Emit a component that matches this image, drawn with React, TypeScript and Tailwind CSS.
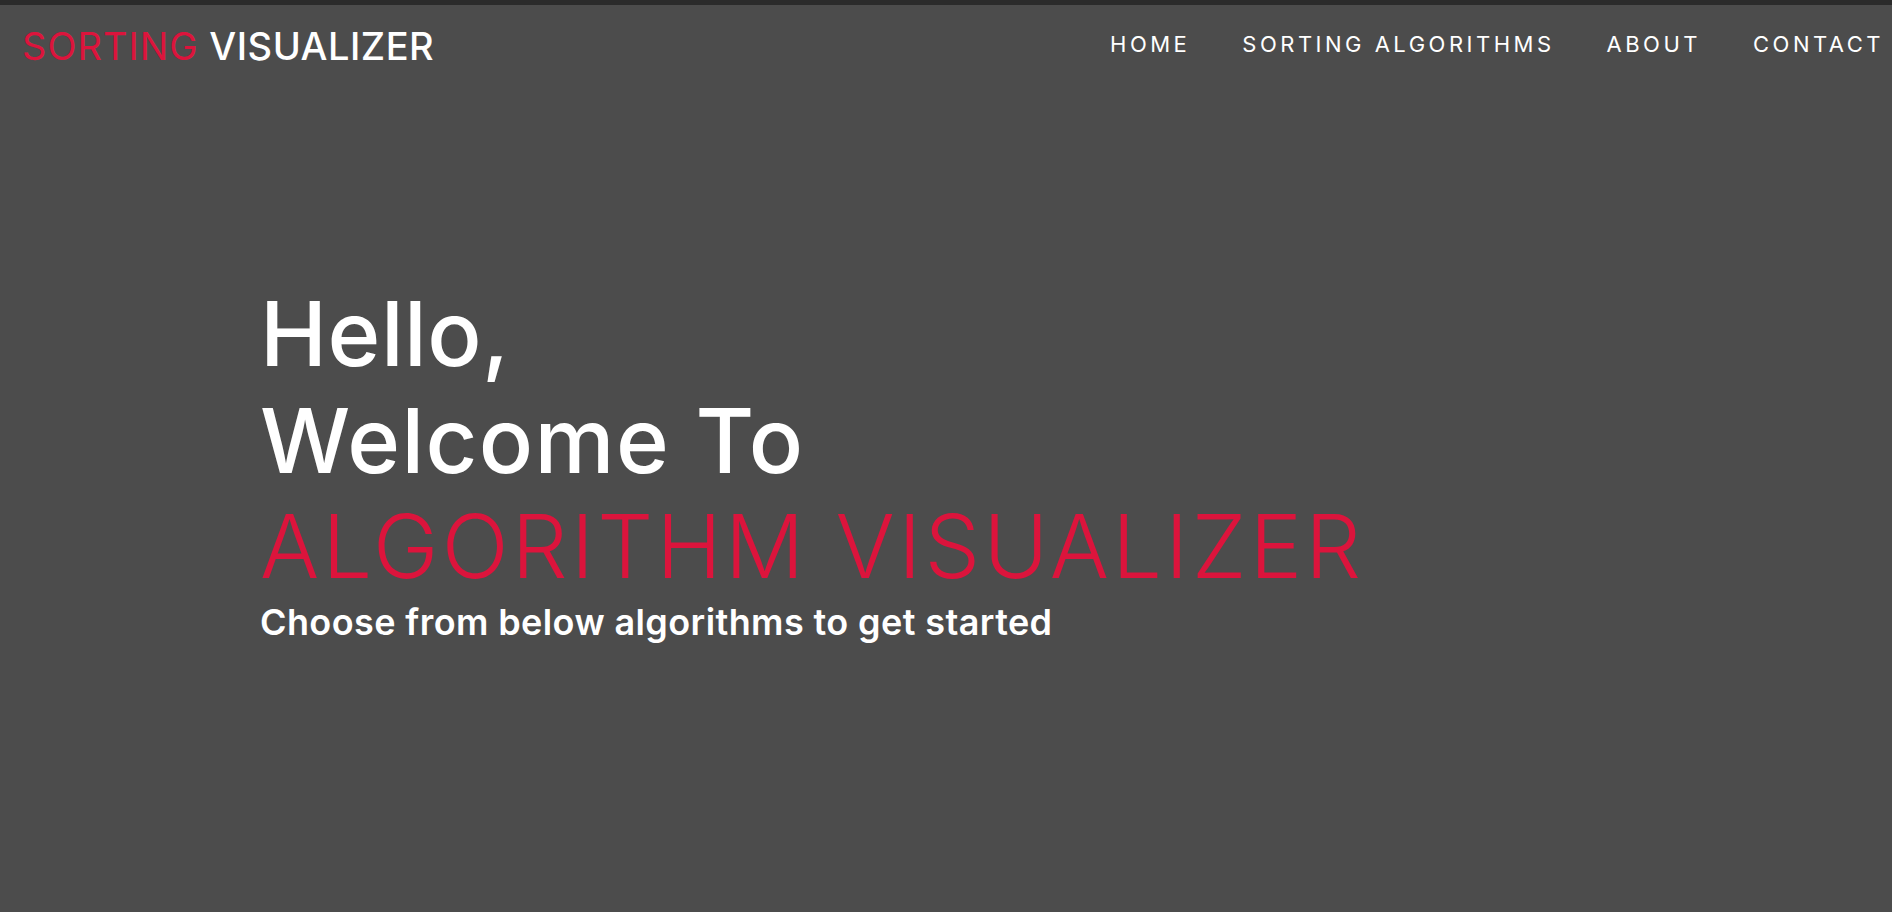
import React from 'react';

const navLinks = ['Home', 'Sorting Algorithms', 'About', 'Contact'];

const App: React.FC = () => {
  return (
    <div className="min-h-screen w-full bg-[#4c4c4c] font-['Inter','Noto_Sans',sans-serif] text-white">
      <div className="h-[5px] bg-[#2b2b2b]"></div>

      <header className="flex h-[81px] items-center justify-between pl-[22px] pr-[8px]">
        <a href="#" className="text-[38px] leading-[44px] whitespace-nowrap">
          <span className="font-normal text-[#dc143c] tracking-[1px]">SORTING</span>{' '}
          <span className="font-medium text-white tracking-[0.5px]">VISUALIZER</span>
        </a>
        <nav className="flex items-center gap-[52px] mb-[3px]">
          {navLinks.map((link) => (
            <a
              key={link}
              href="#"
              className="text-[22px] leading-[28px] font-normal uppercase tracking-[3.5px] text-white"
            >
              {link}
            </a>
          ))}
        </nav>
      </header>

      <main className="pl-[260px] pt-[194px]">
        <h1 className="font-medium text-white">
          <span className="block text-[90px] leading-[107px] tracking-[0.5px]">Hello,</span>
          <span className="block text-[90px] leading-[107px] tracking-[1.4px]">Welcome To</span>
          <span className="block text-[88px] leading-[105px] font-light text-[#dc143c] tracking-[3.3px]">
            ALGORITHM VISUALIZER
          </span>
        </h1>
        <p className="mt-[1px] text-[36px] leading-[44px] font-semibold tracking-[0.4px] text-white">
          Choose from below algorithms to get started
        </p>
      </main>
    </div>
  );
};

export default App;
